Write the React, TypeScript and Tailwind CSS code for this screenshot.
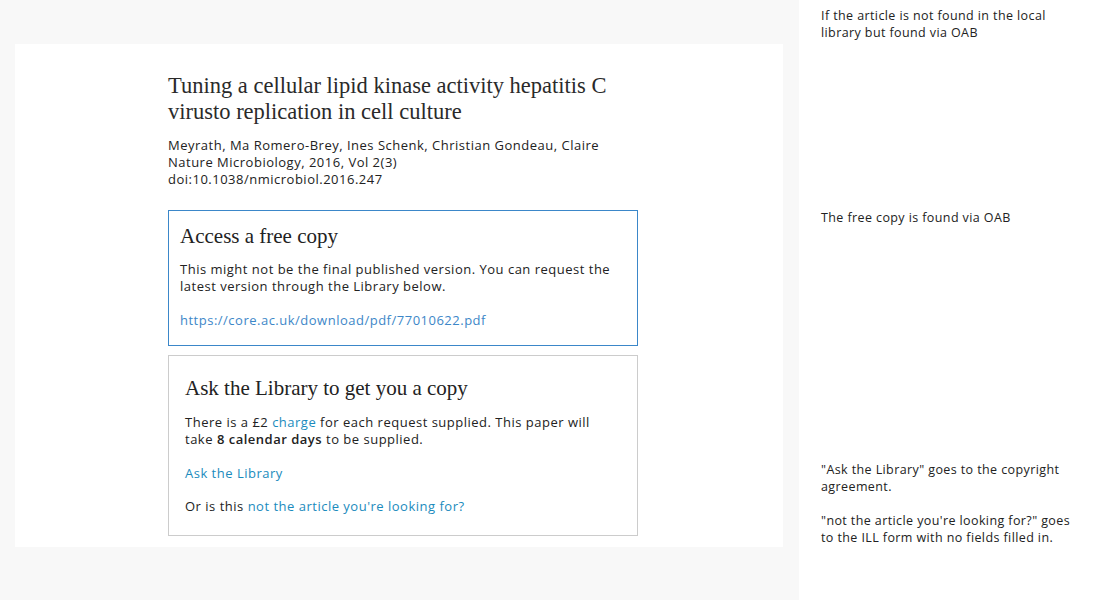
import React from "react";

const serif = { fontFamily: '"Liberation Serif", "DejaVu Serif", serif', letterSpacing: 0 };

export default function App() {
  return (
    <div className="flex w-[1100px] h-[600px] text-[#222]" style={{ fontFamily: '"Open Sans", Lato, sans-serif' }}>
      <div className="w-[799px] h-full bg-[#f8f8f8] pl-[15px] pr-[16px] pt-[44px]">
        <div className="bg-white h-[503px] pl-[153px] pt-[29px] tracking-[0.5px]">
          <div className="w-[470px]">
            <h1 className="text-[22.5px] leading-[26px] text-[#2a2a2a]" style={serif}>
              Tuning a cellular lipid kinase activity hepatitis C virusto replication in cell culture
            </h1>
            <div className="mt-[12px] text-[13px] leading-[17px]">
              <div>Meyrath, Ma Romero-Brey, Ines Schenk, Christian Gondeau, Claire</div>
              <div>Nature Microbiology, 2016, Vol 2(3)</div>
              <div>doi:10.1038/nmicrobiol.2016.247</div>
            </div>
            <div className="mt-[22px] border border-[#3b87c9] px-[11px] pt-[12px] pb-[14px] h-[136px]">
              <h2 className="text-[21px] leading-[26px]" style={serif}>Access a free copy</h2>
              <p className="mt-[12px] text-[13px] leading-[17px]">
                This might not be the final published version. You can request the latest version through the Library below.
              </p>
              <a className="block mt-[17px] text-[13px] leading-[17px] text-[#3d87c8]">
                https://core.ac.uk/download/pdf/77010622.pdf
              </a>
            </div>
            <div className="mt-[9px] border border-[#cccccc] px-[16px] pt-[19px] h-[181px]">
              <h2 className="text-[21px] leading-[26px]" style={serif}>Ask the Library to get you a copy</h2>
              <p className="mt-[13px] text-[13px] leading-[17px]">
                There is a £2 <a className="text-[#1b8bbd]">charge</a> for each request supplied. This paper will take{" "}
                <b className="font-semibold">8 calendar days</b> to be supplied.
              </p>
              <a className="block mt-[17px] text-[13px] leading-[17px] text-[#1b8bbd]">Ask the Library</a>
              <p className="mt-[16px] text-[13px] leading-[17px]">
                Or is this <a className="text-[#1b8bbd]">not the article you're looking for?</a>
              </p>
            </div>
          </div>
        </div>
      </div>
      <div className="flex-1 bg-white text-[12.5px] leading-[17px] tracking-[0.4px] relative">
        <p className="absolute left-[22px] top-[7px] w-[250px]">If the article is not found in the local library but found via OAB</p>
        <p className="absolute left-[22px] top-[209px] w-[250px]">The free copy is found via OAB</p>
        <p className="absolute left-[22px] top-[461px] w-[260px]">
          "Ask the Library" goes to the copyright agreement.
          <br />
          <br />
          "not the article you're looking for?" goes to the ILL form with no fields filled in.
        </p>
      </div>
    </div>
  );
}
